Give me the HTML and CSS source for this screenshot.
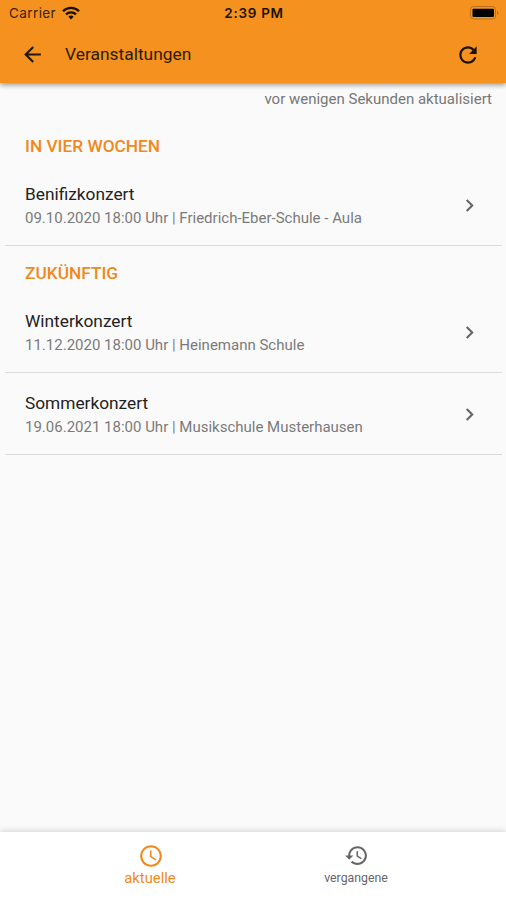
FILE: index.html
```html
<!DOCTYPE html>
<html lang="de">
<head>
    <meta charset="UTF-8">
    <meta name="viewport" content="width=device-width, initial-scale=1.0">
    <title>Veranstaltungen</title>
    <link rel="stylesheet" href="styles.css">
</head>
<body>

    <header class="header">
        <div class="status-bar">
            <div class="carrier">
                <span>Carrier</span>
                <svg width="18" height="14" viewBox="0 0 18 14" fill="none" stroke="#1a1000" stroke-width="2.3">
                    <path d="M1 5.2a11.4 11.4 0 0 1 16 0" />
                    <path d="M4 8.4a7 7 0 0 1 10 0" />
                    <path d="M9 13.4L6.4 10.7a3.7 3.7 0 0 1 5.2 0z" fill="#1a1000" stroke="none" />
                </svg>
            </div>
            <span class="time">2:39 PM</span>
            <svg class="battery" width="29" height="14" viewBox="0 0 29 14">
                <rect x="0.5" y="0.5" width="25" height="12.5" rx="3" fill="none" stroke="#b87020" />
                <rect x="2.5" y="2.7" width="21.5" height="8.2" rx="1" fill="#000" />
                <path d="M27 4.7v4.2a2.3 2.3 0 0 0 0-4.2z" fill="#b87020" />
            </svg>
        </div>
        <div class="app-bar">
            <svg class="back" width="25" height="25" viewBox="0 0 24 24" fill="#21180a">
                <path d="M20 11H7.83l5.59-5.59L12 4l-8 8 8 8 1.41-1.41L7.83 13H20v-2z" />
            </svg>
            <h1>Veranstaltungen</h1>
            <svg width="26" height="26" viewBox="0 0 24 24" fill="#1a1208">
                <path d="M17.65 6.35C16.2 4.9 14.21 4 12 4c-4.42 0-7.99 3.58-7.99 8s3.57 8 7.99 8c3.73 0 6.84-2.55 7.73-6h-2.08c-.82 2.33-3.04 4-5.65 4-3.31 0-6-2.69-6-6s2.69-6 6-6c1.66 0 3.14.69 4.22 1.78L13 11h7V4l-2.35 2.35z" />
            </svg>
        </div>
    </header>

    <main class="content">
        <p class="updated">vor wenigen Sekunden aktualisiert</p>

        <h2>IN VIER WOCHEN</h2>
        <div class="event">
            <div class="event-text">
                <div class="title">Benifizkonzert</div>
                <div class="details">09.10.2020 18:00 Uhr | Friedrich-Eber-Schule - Aula</div>
            </div>
            <svg width="25" height="25" viewBox="0 0 24 24" fill="#666"><path d="M10 6L8.59 7.41 13.17 12l-4.58 4.59L10 18l6-6z" /></svg>
        </div>

        <h2>ZUKÜNFTIG</h2>
        <div class="event">
            <div class="event-text">
                <div class="title">Winterkonzert</div>
                <div class="details">11.12.2020 18:00 Uhr | Heinemann Schule</div>
            </div>
            <svg width="25" height="25" viewBox="0 0 24 24" fill="#666"><path d="M10 6L8.59 7.41 13.17 12l-4.58 4.59L10 18l6-6z" /></svg>
        </div>
        <div class="event">
            <div class="event-text">
                <div class="title">Sommerkonzert</div>
                <div class="details">19.06.2021 18:00 Uhr | Musikschule Musterhausen</div>
            </div>
            <svg width="25" height="25" viewBox="0 0 24 24" fill="#666"><path d="M10 6L8.59 7.41 13.17 12l-4.58 4.59L10 18l6-6z" /></svg>
        </div>
    </main>

    <nav class="bottom-nav">
        <a class="tab active">
            <svg width="26" height="26" viewBox="0 0 24 24" fill="currentColor">
                <path d="M11.99 2C6.47 2 2 6.48 2 12s4.47 10 9.99 10C17.52 22 22 17.52 22 12S17.52 2 11.99 2zM12 20c-4.42 0-8-3.58-8-8s3.58-8 8-8 8 3.58 8 8-3.58 8-8 8zm.5-13H11v6l5.25 3.15.75-1.23-4.5-2.67z" />
            </svg>
            <span>aktuelle</span>
        </a>
        <a class="tab">
            <svg width="25" height="25" viewBox="0 0 24 24" fill="currentColor">
                <path d="M13 3c-4.97 0-9 4.03-9 9H1l3.89 3.89.07.14L9 12H6c0-3.87 3.13-7 7-7s7 3.13 7 7-3.13 7-7 7c-1.93 0-3.68-.79-4.94-2.06l-1.42 1.42C8.27 19.99 10.51 21 13 21c4.97 0 9-4.03 9-9s-4.03-9-9-9zm-1 5v5l4.28 2.54.72-1.21-3.5-2.08V8H12z" />
            </svg>
            <span>vergangene</span>
        </a>
    </nav>

</body>
</html>
```

FILE: styles.css
```css
* {
    box-sizing: border-box;
}
body {
    margin: 0;
    height: 100vh;
    display: flex;
    flex-direction: column;
    background: #fafafa;
    font-family: Roboto, sans-serif;
    overflow: hidden;
}
svg {
    display: block;
    flex-shrink: 0;
}
.header {
    height: 83px;
    background: #f5911e;
    box-shadow: 0 2px 5px rgba(0, 0, 0, 0.4);
    z-index: 1;
}
.status-bar {
    height: 26px;
    padding: 0 7px 0 9px;
    display: grid;
    grid-template-columns: 1fr auto 1fr;
    align-items: center;
    font-family: Inter, sans-serif;
    font-size: 13.5px;
    color: #38240a;
}
.carrier {
    display: flex;
    align-items: center;
    gap: 6px;
    letter-spacing: 0.4px;
}
.time {
    font-weight: 600;
    letter-spacing: 0.7px;
    color: #1c1205;
}
.battery {
    justify-self: end;
}
.app-bar {
    height: 57px;
    padding: 0 25px 0 20px;
    display: flex;
    align-items: center;
}
.app-bar h1 {
    flex: 1;
    margin: 0 0 1px 20px;
    font-size: 17.4px;
    font-weight: 400;
    color: #2b1c08;
}
.content {
    flex: 1;
    padding: 0 4px 0 5px;
}
.updated {
    margin: 7px 10px 0 0;
    line-height: 19px;
    text-align: right;
    font-size: 15px;
    color: #777;
}
h2 {
    margin: 0 20px;
    padding: 15px 0 6px;
    line-height: 24px;
    font-size: 17.3px;
    font-weight: 500;
    color: #f08a1c;
}
.updated + h2 {
    padding-top: 25px;
}
.event {
    height: 82px;
    padding: 2px 20px 0;
    display: flex;
    align-items: center;
    justify-content: space-between;
    border-bottom: 1px solid #dcdcdc;
}
.title {
    line-height: 24px;
    font-size: 17.3px;
    color: #222;
}
.details {
    padding-top: 1px;
    line-height: 23px;
    font-size: 15px;
    color: #7a7a7a;
}
.bottom-nav {
    height: 68px;
    display: flex;
    justify-content: center;
    background: #fff;
    box-shadow: 0 -1px 6px rgba(0, 0, 0, 0.16);
}
.tab {
    width: 206px;
    padding-top: 11px;
    display: flex;
    flex-direction: column;
    align-items: center;
    font-size: 12.3px;
    color: #666;
}
.tab svg {
    margin: 0 0 1px 1px;
}
.tab span {
    line-height: 18px;
}
.tab.active {
    font-size: 14.8px;
    color: #f08a1c;
}
.tab.active svg {
    margin: 0 0 0 2px;
}
```
